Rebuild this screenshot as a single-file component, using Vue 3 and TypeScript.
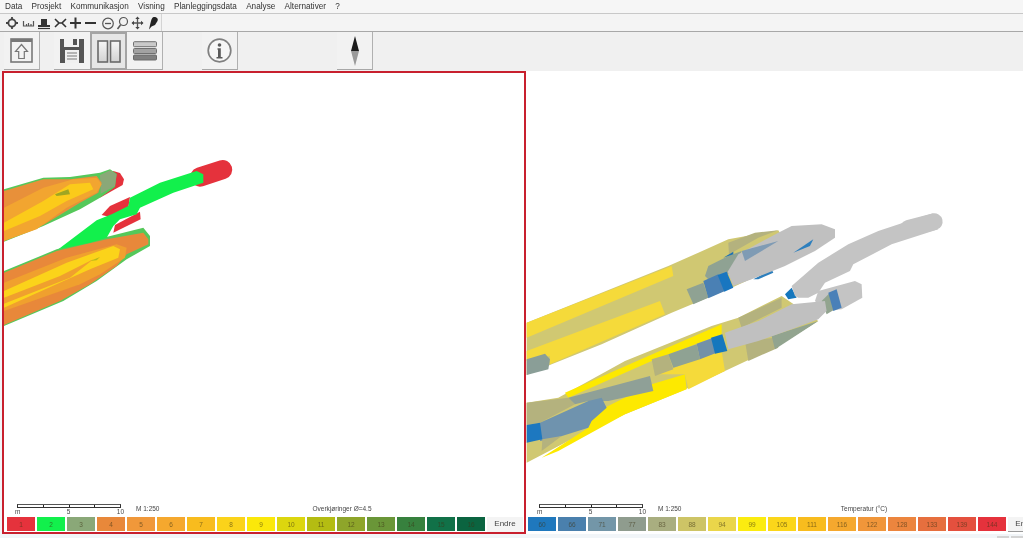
<script setup lang="ts">
const menus = ['Data', 'Prosjekt', 'Kommunikasjon', 'Visning', 'Planleggingsdata', 'Analyse', 'Alternativer', '?']

const leftColors = ['#e5323c', '#12f04c', '#8aa878', '#e8883a', '#f0983a', '#f5a82e', '#f8bc1e', '#fbd31a', '#fbe80a', '#dcd60e', '#b4bc12', '#8ea52a', '#6a9638', '#37813e', '#117148', '#0b6440']
const leftLegend = leftColors.map((color, i) => ({ label: String(i + 1), color }))

const rightColors = ['#1f78bd', '#4a80ad', '#7396a8', '#8f9c8e', '#a9ae80', '#cdc466', '#ead64a', '#fbec10', '#fbd61a', '#f8bc1e', '#f5a82e', '#f0963a', '#ec853e', '#e66f3e', '#e4503e', '#e5323c']
const rightLabels = [60, 66, 71, 77, 83, 88, 94, 99, 105, 111, 116, 122, 128, 133, 139, 144]
const rightLegend = rightLabels.map((value, i) => ({ label: String(value), color: rightColors[i] }))

// map shapes, in 3x coordinates of the map area
const leftShapes: [string, string][] = [
  // red ends under the green
  ['#e5323c', '300,140 340,60 360,66 372,85 368,102 345,115'],
  ['#e5323c', '305,192 330,165 390,138 385,170 340,200'],
  ['#e5323c', '340,245 345,222 420,182 422,205'],
  // upper tongue
  ['#55c85a', '12,115 130,80 210,78 300,65 330,55 350,68 345,108 300,140 240,175 130,225 12,272'],
  ['#8aa878', '300,72 330,58 350,70 345,105 302,128'],
  ['#e8903a', '12,120 130,85 210,85 290,75 305,95 295,125 240,155 130,222 12,270'],
  ['#f2a530', '12,170 130,110 220,85 290,80 305,100 290,125 200,170 110,235 12,270'],
  ['#fbcb1a', '12,215 130,150 210,100 270,95 280,115 200,150 120,195 12,240'],
  ['#9fa622', '165,130 205,115 210,130 170,135'],
  // lower tongue
  ['#55c85a', '12,360 170,295 310,260 430,230 450,255 450,285 380,325 290,390 190,450 12,525'],
  ['#e8883a', '12,365 170,300 320,265 430,245 445,265 445,280 380,310 350,345 270,400 180,450 12,522'],
  ['#f0a02e', '12,395 200,320 350,280 380,290 375,320 300,370 240,400 12,480'],
  ['#fbd31a', '12,420 200,335 340,285 360,295 355,320 270,355 12,470'],
  ['#f0a02e', '12,440 180,375 280,325 210,380 12,458'],
  ['#b8b81a', '270,330 300,318 290,328'],
]

const rightShapes: [string, string][] = [
  // upper tongue
  ['#d0c872', '5,365 430,195 520,155 610,115 760,88 780,120 740,205 620,260 440,335 230,430 80,490 5,522'],
  ['#f5da3a', '5,365 440,195 445,225 5,410'],
  ['#f5da3a', '5,450 405,300 420,340 75,490 75,465 5,480'],
  ['#8a9e97', '5,475 60,458 75,475 70,505 5,522'],
  ['#8fa293', '550,195 610,165 650,150 620,215 555,240 540,225'],
  ['#8fa293', '485,265 535,245 550,290 505,310'],
  ['#4a80b4', '535,240 580,220 600,270 550,292'],
  ['#1976c0', '578,222 605,212 625,260 598,272'],
  ['#b4b27e', '610,125 690,95 760,88 700,110 630,150 612,160'],
  ['#2d7fbd', '685,235 740,205 745,215 700,235'],
  ['#c0c0c0', '608,212 640,160 760,95 800,75 890,70 930,85 930,110 870,150 780,195 680,235 625,255'],
  ['#7f9bb4', '650,150 760,120 660,180'],
  ['#1c70b4', '595,170 625,152 625,160'],
  ['#2d7fbd', '805,155 865,115 855,135'],
  // lower tongue
  ['#d0c872', '5,605 100,590 300,480 560,375 640,350 770,285 880,360 750,440 600,510 470,570 300,640 130,720 5,785'],
  ['#fde900', '120,575 370,465 590,370 590,400 380,480 130,590'],
  ['#fde900', '200,640 380,550 480,520 485,565 300,640 100,750 50,770 190,680'],
  ['#f5da3a', '390,520 590,450 600,510 490,565 480,520'],
  ['#b4b27e', '380,475 430,460 445,505 390,525'],
  ['#b4b27e', '640,350 770,290 770,320 650,380'],
  ['#b4b27e', '660,420 750,410 760,440 670,480'],
  ['#92a48f', '740,405 880,360 750,445'],
  ['#8fa293', '430,460 515,430 525,475 445,500'],
  ['#7391a8', '515,428 565,410 575,455 525,475'],
  ['#1577bd', '558,410 592,400 607,450 570,458'],
  // lower left end
  ['#b4b27e', '5,605 130,590 150,610 45,665 5,672'],
  ['#8fa097', '130,590 375,525 385,570 250,600 190,600 150,610'],
  ['#6f93ae', '45,665 190,600 230,590 245,620 200,660 190,680 80,715 45,720'],
  ['#1d78c0', '5,672 45,665 52,715 5,725'],
  ['#b4b27e', '52,715 110,705 50,750'],
  // grey strands
  ['#c4c4c4', '880,270 990,240 1010,250 1012,290 950,325 900,330 870,300'],
  ['#92a48f', '890,300 915,275 930,325 905,340'],
  ['#4a80b8', '910,275 935,265 950,320 925,330'],
  ['#c0c0c0', '600,395 700,360 800,310 900,300 905,330 880,355 800,385 700,420 610,445'],
  ['#1577bd', '780,280 800,260 815,290 790,295'],
  ['#c4c4c4', '810,285 800,255 880,185 970,130 1060,90 1180,50 1225,37 1240,85 1100,130 985,190 975,210 900,245 880,275 850,290 820,290'],
]
</script>

<template>
  <div class="app">
    <div class="menubar">
      <span v-for="m in menus" :key="m">{{ m }}</span>
    </div>

    <div class="toolbar-small">
      <div class="small-group">
        <svg width="161" height="16" viewBox="0 0 161 16" fill="none" stroke="#333" stroke-width="1.4">
          <!-- crosshair -->
          <circle cx="12" cy="8" r="3.6" stroke="#444" stroke-width="1.8" />
          <path d="M12 2v3M12 11v3M6 8h3M15 8h3" stroke="#444" stroke-width="1.8" />
          <!-- ruler -->
          <path d="M23.500 6v5h10V6M26.500 9v2M28.500 8v3M31 9v2" stroke="#555" stroke-width="1.2" />
          <!-- stamp -->
          <path d="M38 12h12v-2h-3V4h-6v6h-3z" fill="#333" stroke="none" />
          <path d="M38 13.500h12" stroke-width="1.2" />
          <!-- cut -->
          <path d="M55 4l4 4-4 4M66 4l-4 4 4 4M59 8h3" stroke-width="1.6" />
          <!-- plus / minus -->
          <path d="M75.500 2.500v11M70 8h11" stroke-width="2" />
          <path d="M85 8h11" stroke-width="2" />
          <!-- zoom out -->
          <circle cx="108" cy="8.500" r="5.300" stroke="#555" stroke-width="1.2" />
          <path d="M105 8.500h6" stroke="#555" stroke-width="1.3" />
          <!-- loupe -->
          <circle cx="123.500" cy="6.500" r="4" stroke="#555" stroke-width="1.2" />
          <path d="M120.500 10l-3 4" stroke="#555" stroke-width="1.6" />
          <!-- pan -->
          <path d="M137.500 3v10M132.500 8h10" stroke="#555" stroke-width="1.3" />
          <path d="M137.500 1.500l-2.200 2.500h4.400zM137.500 14.500l-2.200-2.500h4.400zM131.500 8l2.500-2.200v4.400zM143.500 8l-2.500-2.200v4.400z" fill="#444" stroke="none" />
          <!-- pin -->
          <path d="M154 2c3 0 4.500 2 3.500 4l-2.500 4-3.500 1.500-2.500 3 1-4.500 1-4c.5-2 1.500-4 3-4z" fill="#222" stroke="none" />
        </svg>
      </div>
    </div>

    <div class="toolbar-large">
      <button class="tool">
        <svg width="23" height="25" viewBox="0 0 23 25">
          <rect x="1" y="1" width="21" height="23" fill="#f2f2f2" stroke="#777" stroke-width="1.6" />
          <rect x="1" y="1" width="21" height="3" fill="#777" />
          <path d="M11.500 6.500l6 7h-3.200v7h-5.600v-7H5.500z" fill="#f4f4f4" stroke="#777" stroke-width="1.2" />
        </svg>
      </button>
      <button class="tool gap-save">
        <svg width="24" height="24" viewBox="0 0 24 24">
          <path d="M0 0h4v8h15V0h5v24H0z" fill="#555" />
          <rect x="13" y="0" width="4" height="6" fill="#555" />
          <rect x="5" y="11" width="14" height="13" fill="#f0f0f0" />
          <path d="M7 14h10M7 17h10M7 20h10" stroke="#777" stroke-width="1.2" />
        </svg>
      </button>
      <button class="tool active">
        <svg width="24" height="23" viewBox="0 0 24 23">
          <defs>
            <linearGradient id="pane" x1="0" y1="0" x2="0" y2="1">
              <stop offset="0" stop-color="#f6f6f6" />
              <stop offset="1" stop-color="#d2d2d2" />
            </linearGradient>
          </defs>
          <rect x="1" y="1" width="9.500" height="21" fill="url(#pane)" stroke="#6a6a6a" stroke-width="1.6" />
          <rect x="13.500" y="1" width="9.500" height="21" fill="url(#pane)" stroke="#6a6a6a" stroke-width="1.6" />
        </svg>
      </button>
      <button class="tool">
        <svg width="24" height="20" viewBox="0 0 24 20">
          <rect x="0.500" y="0.700" width="23" height="5" rx="1" fill="#c9c9c9" stroke="#707070" />
          <rect x="0.500" y="7.500" width="23" height="5" rx="1" fill="#a2a2a2" stroke="#707070" />
          <rect x="0.500" y="14" width="23" height="5" rx="1" fill="#808080" stroke="#6a6a6a" />
        </svg>
      </button>
      <button class="tool gap-info">
        <svg width="25" height="25" viewBox="0 0 25 25">
          <circle cx="12.500" cy="12.500" r="11.300" fill="#f6f6f6" stroke="#808080" stroke-width="1.7" />
          <circle cx="12.500" cy="7" r="1.800" fill="#5a5a5a" />
          <path d="M10.500 10.300h3.300v8.700h1.700v1.400h-6V19H11v-7.300h-.5z" fill="#5a5a5a" />
        </svg>
      </button>
      <button class="tool gap-compass">
        <svg width="8" height="30" viewBox="0 0 8 30">
          <path d="M4 0l4 15H0z" fill="#1c1c1c" />
          <path d="M0 15h8l-4 15z" fill="#9a9a9a" />
        </svg>
      </button>
    </div>

    <div class="panels">
      <section class="panel panel-left">
        <svg class="map" viewBox="0 0 520 430" preserveAspectRatio="xMinYMin slice">
          <g transform="translate(-4 78) scale(0.3333)">
            <polygon v-for="(s, i) in leftShapes" :key="i" :fill="s[0]" :points="s[1]" />
            <!-- the long green strand with its red end -->
            <path d="M600 78 L668 56" stroke="#e5323c" stroke-width="58" stroke-linecap="round" fill="none" />
            <polygon fill="#12f04c" points="175,295 290,208 335,190 385,165 390,140 480,95 590,60 610,70 610,95 520,125 420,170 410,190 360,205 340,225 320,260 270,275" />
          </g>
        </svg>
        <div class="scale-row">
          <div class="scale">
            <div class="scale-bar"><i /><i /><i /><i /></div>
            <div class="scale-labels"><span>m</span><span>5</span><span>10</span></div>
          </div>
          <span class="scale-text">M 1:250</span>
          <span class="legend-title title-left">Overkjøringer Ø=4.5</span>
        </div>
        <div class="legend">
          <span v-for="item in leftLegend" :key="item.label" class="swatch" :style="{ background: item.color }">{{ item.label }}</span>
          <span class="change">Endre</span>
        </div>
      </section>

      <section class="panel panel-right">
        <svg class="map" viewBox="0 0 497 430" preserveAspectRatio="xMinYMin slice">
          <g transform="translate(-1 128) scale(0.3333)">
            <polygon v-for="(s, i) in rightShapes" :key="i" :fill="s[0]" :points="s[1]" />
            <path d="M1150 82 L1228 62" stroke="#c4c4c4" stroke-width="50" stroke-linecap="round" fill="none" />
          </g>
        </svg>
        <div class="scale-row">
          <div class="scale">
            <div class="scale-bar"><i /><i /><i /><i /></div>
            <div class="scale-labels"><span>m</span><span>5</span><span>10</span></div>
          </div>
          <span class="scale-text">M 1:250</span>
          <span class="legend-title title-right">Temperatur (°C)</span>
        </div>
        <div class="legend">
          <span v-for="item in rightLegend" :key="item.label" class="swatch" :style="{ background: item.color }">{{ item.label }}</span>
          <span class="change">Endre</span>
        </div>
      </section>

      <div class="corner-tabs"><i /><i /></div>
    </div>
  </div>
</template>

<style>
html,
body {
  margin: 0;
  overflow: hidden;
}
</style>

<style scoped>
.app {
  width: 1023px;
  height: 538px;
  display: flex;
  flex-direction: column;
  overflow: hidden;
  background: #f1f5f8;
  font-family: 'Liberation Sans', Arial, sans-serif;
  color: #333;
  filter: blur(0.4px);
}

.menubar {
  height: 13px;
  flex: none;
  display: flex;
  align-items: center;
  gap: 9.3px;
  padding: 0 0 0 5px;
  font-size: 8.2px;
  background: #f6f6f6;
  border-bottom: 1px solid #c8c8c8;
}

.toolbar-small {
  height: 17px;
  flex: none;
  background: #f4f4f4;
  border-bottom: 1px solid #a8a8a8;
}

.small-group {
  width: 162px;
  height: 17px;
  display: flex;
  align-items: center;
  background: #f2f2f2;
  border-right: 1px solid #d4d4d4;
  box-sizing: border-box;
}

.toolbar-large {
  height: 39px;
  flex: none;
  display: flex;
  padding-left: 4px;
  background: #f0f0f0;
}

.tool {
  width: 36px;
  height: 38px;
  padding: 0;
  flex: none;
  display: flex;
  align-items: center;
  justify-content: center;
  box-sizing: border-box;
  background: #f2f2f2;
  border: 0;
  border-right: 1px solid #b0b0b0;
  border-bottom: 1px solid #a8a8a8;
}

.tool.active {
  width: 37px;
  background: #e6e6e6;
  border: 2px solid #a4a4a4;
}

.gap-save {
  margin-left: 14px;
  border-right: 0;
}

.gap-info {
  margin-left: 39px;
}

.gap-compass {
  margin-left: 99px;
}

.panels {
  flex: 1;
  min-height: 0;
  position: relative;
  display: flex;
  align-items: flex-start;
  padding-left: 2px;
}

.panel {
  height: 463px;
  flex: none;
  display: flex;
  flex-direction: column;
  box-sizing: border-box;
  background: #fff;
  overflow: hidden;
}

.panel-left {
  width: 524px;
  border: 2px solid #c8202e;
}

.panel-right {
  width: 497px;
  padding: 2px 0;
}

.map {
  flex: 1;
  min-height: 0;
  width: 100%;
  display: block;
}

.scale-row {
  height: 14px;
  flex: none;
  position: relative;
  display: flex;
  padding: 1px 0 0 13px;
  box-sizing: border-box;
  font-size: 6.5px;
  color: #444;
}

.scale {
  width: 104px;
  flex: none;
}

.scale-bar {
  height: 4px;
  display: flex;
  box-sizing: border-box;
  border: 1px solid #333;
  border-top-color: #555;
}

.scale-bar i {
  flex: 1;
  border-right: 1.500px solid #222;
}

.scale-bar i:last-child {
  border-right: 0;
}

.scale-labels {
  display: flex;
  justify-content: space-between;
  margin: 0 -3px 0 -2px;
  line-height: 7px;
}

.scale-text {
  margin-left: 15px;
  line-height: 9px;
}

.legend-title {
  position: absolute;
  top: 1px;
  line-height: 9px;
  white-space: nowrap;
  transform: translateX(-50%);
}

.title-left {
  left: 338px;
}

.title-right {
  left: 338px;
}

.legend {
  height: 15px;
  flex: none;
  display: flex;
  gap: 2px;
  padding-left: 3px;
}

.panel-right .legend {
  padding-left: 2px;
  width: 520px;
}

.swatch {
  width: 28px;
  flex: none;
  height: 14px;
  display: flex;
  align-items: center;
  justify-content: center;
  font-size: 6.5px;
  color: rgba(60, 50, 20, 0.6);
}

.change {
  width: 36px;
  flex: none;
  text-align: center;
  font-size: 8px;
  line-height: 14px;
  color: #444;
  background: #f4f4f4;
}

.panel-right .change {
  border-bottom: 1px solid #9a9a9a;
}

.corner-tabs {
  position: absolute;
  right: 0;
  bottom: 0;
  display: flex;
  gap: 2px;
}

.corner-tabs i {
  width: 12px;
  height: 2px;
  background: #d4d4d4;
}
</style>
